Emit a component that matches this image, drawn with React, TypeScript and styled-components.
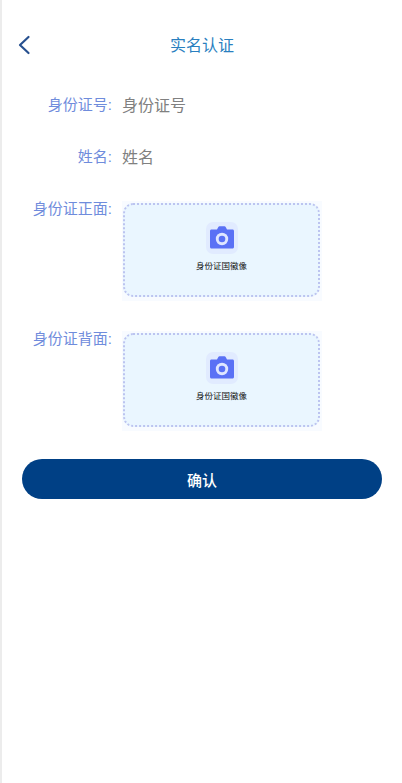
import React from "react";
import styled, { createGlobalStyle } from "styled-components";

const GlobalStyle = createGlobalStyle`
  html, body {
    margin: 0;
    padding: 0;
    background: #fff;
    font-family: "Liberation Sans", "Noto Sans CJK SC", sans-serif;
  }
`;

const UploadBox = ({ caption }: { caption: string }) => (
  <UploadFrame>
    <Upload>
      <IconTile>
        <svg width="26" height="24" viewBox="0 0 26 24">
          <path
            d="M8 3.5 9.2 1.2C9.5.6 10 .3 10.6.3h4.8c.6 0 1.1.3 1.4.9L18 3.5h5.5c.9 0 1.5.6 1.5 1.5v16c0 .9-.6 1.5-1.5 1.5h-21C1.600 22.500 1 21.900 1 21V5c0-.9.6-1.500 1.500-1.500z"
            fill="#5a71f5"
          />
          <circle cx="13" cy="13" r="6.200" fill="#dfe6ff" />
          <circle cx="13" cy="13" r="3.300" fill="#5a71f5" />
        </svg>
      </IconTile>
      <Caption>{caption}</Caption>
    </Upload>
  </UploadFrame>
);

const App = () => {
  return (
    <Page>
      <GlobalStyle />
      <Header>
        <BackButton aria-label="back">
          <svg width="14" height="20" viewBox="0 0 14 20" fill="none">
            <path
              d="M11.500 2 3 10l8.500 8"
              stroke="#27508f"
              strokeWidth="2.200"
              strokeLinecap="round"
              strokeLinejoin="round"
            />
          </svg>
        </BackButton>
        <Title>实名认证</Title>
      </Header>
      <Form>
        <TextRow>
          <Label>身份证号:</Label>
          <Input placeholder="身份证号" />
        </TextRow>
        <TextRow>
          <Label>姓名:</Label>
          <Input placeholder="姓名" />
        </TextRow>
        <UploadRow>
          <UploadLabel>身份证正面:</UploadLabel>
          <UploadBox caption="身份证国徽像" />
        </UploadRow>
        <UploadRow>
          <UploadLabel>身份证背面:</UploadLabel>
          <UploadBox caption="身份证国徽像" />
        </UploadRow>
        <Submit type="button">确认</Submit>
      </Form>
    </Page>
  );
};

export default App;

const Page = styled.div`
  box-sizing: border-box;
  width: 402px;
  height: 783px;
  overflow: hidden;
  border-left: 2px solid #ececec;
  background: #fff;
`;

const Header = styled.header`
  position: relative;
  display: flex;
  align-items: center;
  justify-content: center;
  height: 44px;
  margin-top: 22px;
`;

const BackButton = styled.button`
  position: absolute;
  left: 15px;
  top: 13px;
  display: flex;
  padding: 0;
  border: none;
  background: none;
`;

const Title = styled.h1`
  margin: 0;
  font-size: 16px;
  font-weight: 400;
  color: #2a7fbf;
`;

const Form = styled.form`
  display: flex;
  flex-direction: column;
  margin-top: 13px;
`;

const TextRow = styled.div`
  display: flex;
  align-items: center;
  gap: 10px;
  height: 52px;
`;

const Label = styled.label`
  width: 110px;
  flex: none;
  text-align: right;
  font-size: 15px;
  line-height: 22px;
  color: #6f8cdc;
`;

const Input = styled.input`
  flex: 1;
  min-width: 0;
  height: 22px;
  margin-top: 2px;
  padding: 0;
  border: none;
  outline: none;
  font-family: inherit;
  font-size: 16px;
  line-height: 22px;

  &::placeholder {
    color: #808080;
    opacity: 1;
  }
`;

const UploadRow = styled.div`
  display: flex;
  gap: 10px;
  height: 130px;

  ${TextRow} + & {
    margin-top: 18px;
  }
`;

const UploadLabel = styled(Label)`
  line-height: 16px;
`;

const UploadFrame = styled.div`
  box-sizing: border-box;
  width: 200px;
  height: 100px;
  padding: 2px 2px 4px 1px;
  background: #f8fbff;
`;

const Upload = styled.div`
  box-sizing: border-box;
  display: flex;
  flex-direction: column;
  align-items: center;
  height: 94px;
  padding-top: 17px;
  border: 2px dotted #bcc4f0;
  border-radius: 10px;
  background: #eaf6ff;
`;

const IconTile = styled.div`
  display: flex;
  align-items: center;
  justify-content: center;
  width: 32px;
  height: 32px;
  border-radius: 7px;
  background: #e1ebff;
`;

const Caption = styled.span`
  margin-top: 6px;
  font-size: 8.500px;
  line-height: 12px;
  color: #111;
`;

const Submit = styled.button`
  width: 360px;
  height: 40px;
  margin: -2px 0 0 20px;
  border: none;
  border-radius: 20px;
  background: #004085;
  color: #fff;
  font-family: inherit;
  font-size: 15px;
  font-weight: 500;
`;
